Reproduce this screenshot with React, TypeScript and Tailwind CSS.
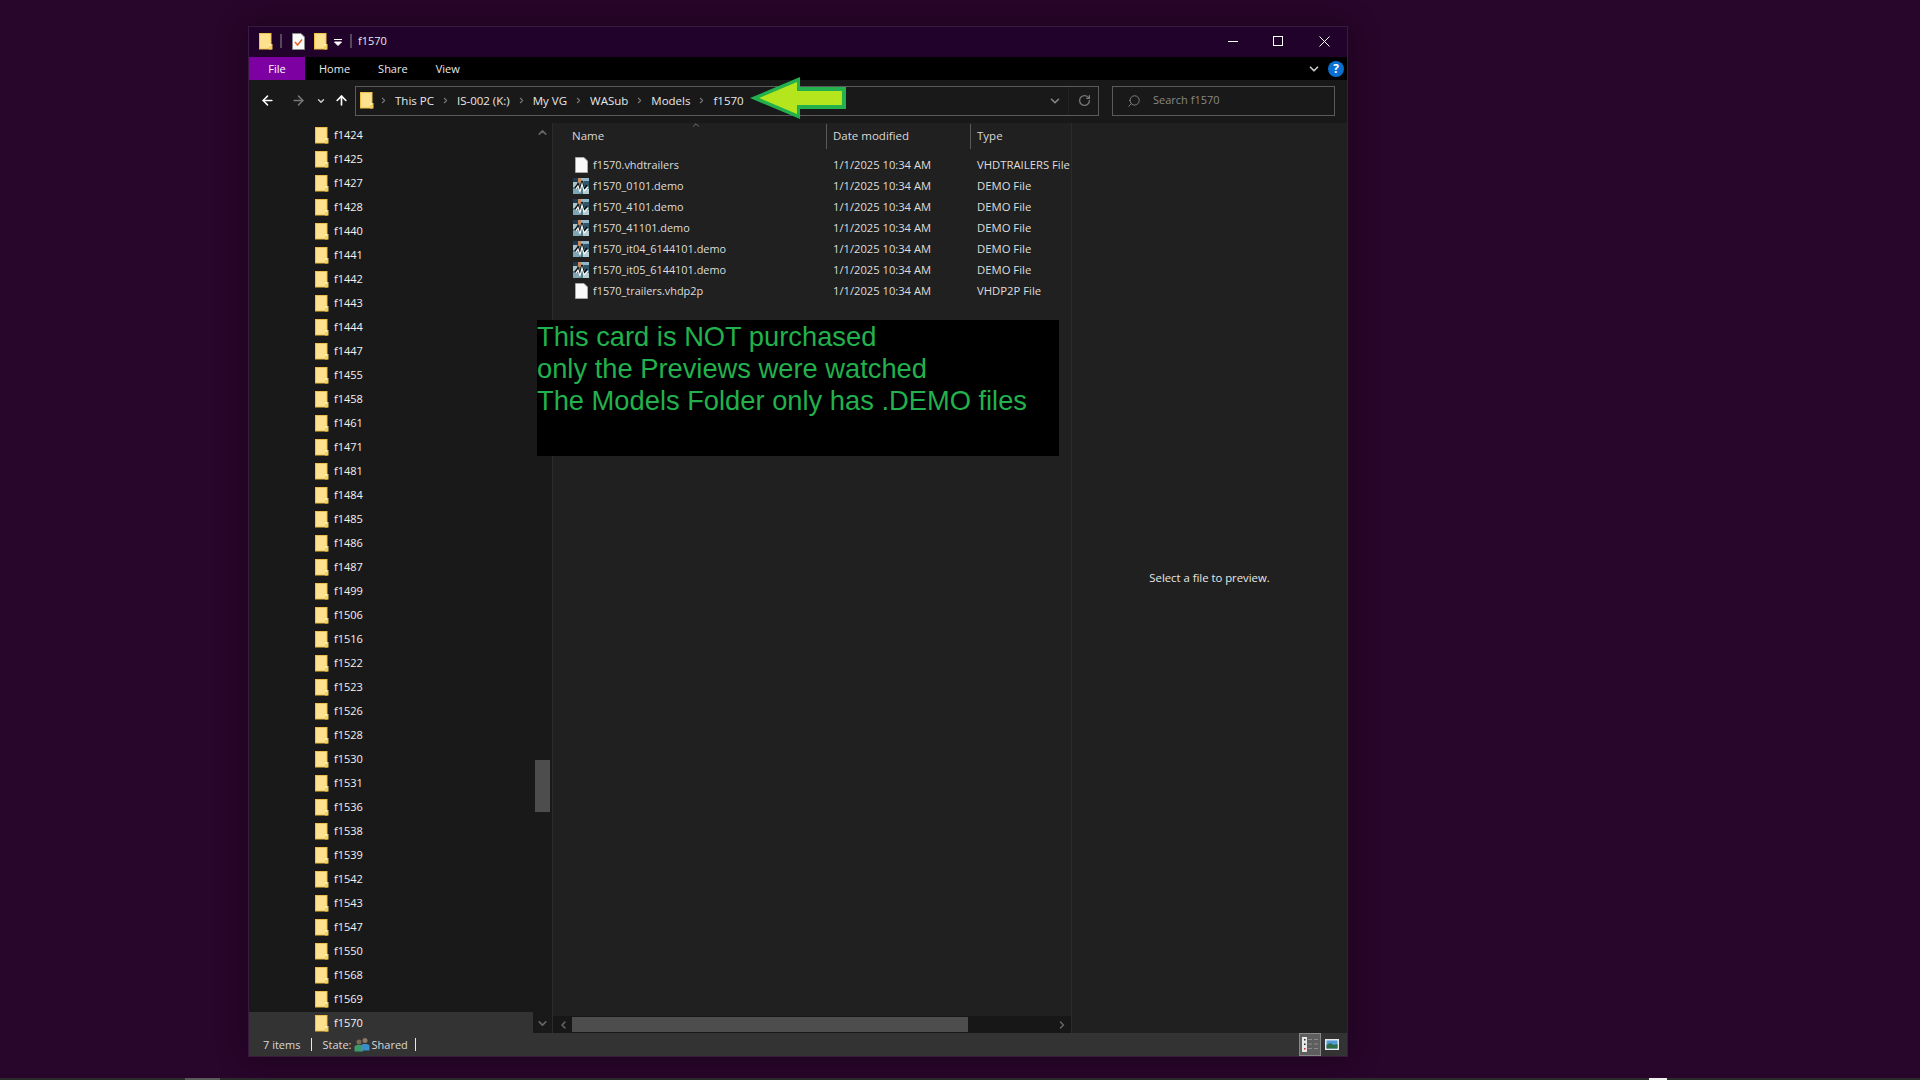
import { ArrowLeft, ArrowRight, ArrowUp, ChevronDown, ChevronLeft, ChevronRight, ChevronUp, RotateCw, Search } from 'lucide-react';

const folders = [
  'f1424', 'f1425', 'f1427', 'f1428', 'f1440', 'f1441', 'f1442', 'f1443', 'f1444', 'f1447',
  'f1455', 'f1458', 'f1461', 'f1471', 'f1481', 'f1484', 'f1485', 'f1486', 'f1487', 'f1499',
  'f1506', 'f1516', 'f1522', 'f1523', 'f1526', 'f1528', 'f1530', 'f1531', 'f1536', 'f1538',
  'f1539', 'f1542', 'f1543', 'f1547', 'f1550', 'f1568', 'f1569', 'f1570',
];

const files = [
  { name: 'f1570.vhdtrailers', type: 'VHDTRAILERS File', demo: false },
  { name: 'f1570_0101.demo', type: 'DEMO File', demo: true },
  { name: 'f1570_4101.demo', type: 'DEMO File', demo: true },
  { name: 'f1570_41101.demo', type: 'DEMO File', demo: true },
  { name: 'f1570_it04_6144101.demo', type: 'DEMO File', demo: true },
  { name: 'f1570_it05_6144101.demo', type: 'DEMO File', demo: true },
  { name: 'f1570_trailers.vhdp2p', type: 'VHDP2P File', demo: false },
];

const crumbs = ['This PC', 'IS-002 (K:)', 'My VG', 'WASub', 'Models', 'f1570'];

function FolderIcon() {
  return (
    <svg width="14" height="17" viewBox="0 0 14 17" className="shrink-0">
      <rect x="0.5" y="0.5" width="11.5" height="15.5" fill="#fde18f" stroke="#eec04a" />
      <rect x="10" y="11" width="3.5" height="5.5" fill="#f5cd5c" />
      <rect x="10" y="11" width="2" height="2" fill="#fff1c4" />
    </svg>
  );
}

function FileIcon() {
  return (
    <svg width="13" height="16" viewBox="0 0 13 16" className="shrink-0">
      <path d="M0.5 0.5H9L12.5 4V15.5H0.5Z" fill="#fafafa" stroke="#a8a8a8" />
    </svg>
  );
}

function DemoIcon() {
  return (
    <svg width="16" height="16" viewBox="0 0 16 16" className="shrink-0">
      <rect width="16" height="16" fill="#4f7f90" />
      <rect width="5" height="4" fill="#1d3a55" />
      <rect x="5" width="3" height="5" fill="#c98a5e" />
      <rect x="8" width="8" height="3" fill="#8fb7c7" />
      <rect y="4" width="4" height="5" fill="#a9c4c9" />
      <rect x="11" y="3" width="5" height="5" fill="#2e5568" />
      <rect y="11" width="6" height="5" fill="#7fa6b4" />
      <rect x="10" y="11" width="6" height="5" fill="#b7cdd4" />
      <path d="M2 10L5 6L7 12L9 3L11 11L14 7" fill="none" stroke="#111" strokeWidth="1.6" />
      <path d="M3 11L5 8L7 14L9 6L11 13L15 9" fill="none" stroke="#fff" strokeWidth="1.1" />
    </svg>
  );
}

function CheckDoc() {
  return (
    <svg width="13" height="17" viewBox="0 0 13 17" className="shrink-0">
      <path d="M0.5 0.5H9L12.5 4V16.5H0.5Z" fill="#fafafa" stroke="#8a8a8a" />
      <path d="M3 9L5.5 12L10 6.5" fill="none" stroke="#e8622c" strokeWidth="1.5" />
    </svg>
  );
}

function SharedIcon() {
  return (
    <svg width="16" height="15" viewBox="0 0 16 15" className="shrink-0">
      <circle cx="5" cy="5" r="2.5" fill="#7a6a58" />
      <path d="M0.5 14.5V10C0.5 8.5 2 8 5 8C8 8 9 8.5 9 10V14.5Z" fill="#3f9a6a" />
      <circle cx="11" cy="3.5" r="2.5" fill="#8a7a68" />
      <path d="M7 13.5V9C7 7.5 8.5 7 11 7C13.5 7 15.5 7.5 15.5 9V13.5Z" fill="#3b8fc9" />
    </svg>
  );
}

function DetailsViewIcon() {
  return (
    <svg width="17" height="17" viewBox="0 0 17 17">
      <rect x="0" y="1" width="5" height="15" fill="#e8e8e8" />
      <rect x="2" y="3" width="1.5" height="1.5" fill="#222" />
      <rect x="2" y="7.5" width="1.5" height="1.5" fill="#222" />
      <rect x="2" y="12" width="1.5" height="1.5" fill="#c0262d" />
      <path d="M6 3.5H10M12 3.5H16M6 8H10M12 8H16M6 12.5H10M12 12.5H16" stroke="#8c8c8c" strokeWidth="1" />
    </svg>
  );
}

function ThumbViewIcon() {
  return (
    <svg width="14" height="11" viewBox="0 0 14 11">
      <rect width="14" height="11" fill="#e8e8e8" />
      <rect x="1.5" y="1.5" width="11" height="8" fill="#4f9ad8" />
      <path d="M1.5 6L5 4L9 6L12.5 5V9.5H1.5Z" fill="#2f6b45" />
    </svg>
  );
}

function GreenArrow() {
  return (
    <svg width="96" height="42" viewBox="0 0 94 42" preserveAspectRatio="none" className="absolute left-[501px] top-[-3px]">
      <polygon points="0,21 49,0 49,10 94,10 94,32 49,32 49,42" fill="#22b14c" />
      <polygon points="9,21 46,5 46,14 90,14 90,28 46,28 46,37" fill="#b5e61d" />
    </svg>
  );
}

export default function App() {
  return (
    <div className="flex h-screen w-screen flex-col overflow-hidden bg-[#28052a] font-['Open_Sans',sans-serif] text-[11.3px] text-[#e8e8e8]">
      <div className="flex-1 pl-[248px] pt-[26px]">
        <div className="flex h-[1031px] w-[1100px] flex-col border border-[#3b1a42] bg-[#191919] shadow-[0_0_30px_rgba(0,0,0,0.3)]">
          {/* title bar */}
          <div className="flex h-[30px] items-center bg-[#21022b] pb-[2px] pl-[10px]">
            <FolderIcon />
            <div className="ml-[7px] h-[14px] w-[2px] bg-[#55485a]" />
            <div className="ml-[10px]"><CheckDoc /></div>
            <div className="ml-[9px]"><FolderIcon /></div>
            <svg width="8" height="7" viewBox="0 0 8 7" className="ml-[6px] mt-[3px]">
              <path d="M0 0.5H8M0.5 3H7.5L4 6.5Z" stroke="#fff" fill="#fff" strokeWidth="1" />
            </svg>
            <div className="ml-[8px] h-[14px] w-[2px] bg-[#55485a]" />
            <span className="ml-[6px] text-[11px]">f1570</span>
            <div className="ml-auto flex">
              <div className="flex h-[28px] w-[46px] items-center justify-center">
                <div className="ml-[2px] h-px w-[10px] bg-white" />
              </div>
              <div className="flex h-[28px] w-[46px] items-center justify-center">
                <div className="h-[10px] w-[10px] border border-white" />
              </div>
              <div className="flex h-[28px] w-[46px] items-center justify-center">
                <svg width="11" height="11" viewBox="0 0 11 11">
                  <path d="M0.5 0.5L10.5 10.5M10.5 0.5L0.5 10.5" stroke="#fff" strokeWidth="1" />
                </svg>
              </div>
            </div>
          </div>

          {/* ribbon tabs */}
          <div className="flex h-[23px] items-center bg-black pt-px text-[11px]">
            <div className="-mt-px flex h-[23px] w-[56px] items-center justify-center bg-[#7d00a3] pt-px text-white">File</div>
            <div className="px-[14px]">Home</div>
            <div className="px-[14px]">Share</div>
            <div className="px-[14px]">View</div>
            <ChevronDown size={14} strokeWidth={3} className="ml-auto text-[#c8c8c8]" />
            <div className="ml-[7px] mr-[3px] flex h-[16px] w-[16px] items-center justify-center rounded-full bg-[#0b6fd0] text-[12px] font-bold text-white">?</div>
          </div>

          {/* toolbar */}
          <div className="relative flex h-[43px] items-center bg-[#191919] pb-[2px]">
            <div className="flex w-[36px] justify-center"><ArrowLeft size={15} strokeWidth={2.4} className="text-white" /></div>
            <div className="flex w-[26px] justify-center"><ArrowRight size={15} strokeWidth={2.4} className="text-[#777]" /></div>
            <div className="flex w-[20px] justify-center"><ChevronDown size={10} strokeWidth={3.5} className="text-[#ccc]" /></div>
            <div className="flex w-[20px] justify-center"><ArrowUp size={15} strokeWidth={2.6} className="text-white" /></div>
            <div className="ml-[4px] flex h-[30px] w-[744px] items-center border border-[#5a5a5a] pl-[4px] text-[11.5px]">
              <FolderIcon />
              <div className="-ml-[2px] flex items-center">
                {crumbs.map((c) => (
                  <div key={c} className="flex items-center">
                    <ChevronRight size={9} strokeWidth={3} className="mx-[7px] text-[#777]" />
                    <span>{c}</span>
                  </div>
                ))}
              </div>
              <ChevronDown size={14} strokeWidth={2.6} className="ml-auto mr-[6px] text-[#888]" />
              <div className="flex h-full w-[30px] items-center justify-center border-l border-[#222] pl-[2px]">
                <RotateCw size={13} strokeWidth={2.4} className="text-[#777]" />
              </div>
            </div>
            <div className="ml-[13px] flex h-[30px] w-[223px] items-center border border-[#5a5a5a] pl-[14px] text-[11px] text-[#888]">
              <Search size={14} strokeWidth={1.5} className="-scale-x-100 text-[#888]" />
              <span className="ml-[12px]">Search f1570</span>
            </div>
            <GreenArrow />
          </div>

          {/* main area */}
          <div className="relative flex min-h-0 flex-1">
            {/* nav pane */}
            <div className="flex w-[303px] shrink-0 overflow-hidden bg-[#191919]">
              <div className="w-[284px] shrink-0 text-[11px]">
                {folders.map((f) => (
                  <div
                    key={f}
                    className={
                      f === 'f1570'
                        ? 'flex h-[24px] items-center gap-[5px] border-t border-[#191919] bg-[#333] pb-px pl-[66px] text-[#f2f2f2]'
                        : 'flex h-[24px] items-center gap-[5px] pl-[66px] text-[#f2f2f2]'
                    }
                  >
                    <FolderIcon />
                    <span>{f}</span>
                  </div>
                ))}
              </div>
              <div className="flex w-[18px] flex-col items-center">
                <ChevronUp size={13} strokeWidth={3} className="mt-[3px] text-[#666]" />
                <div className="ml-px mt-[621px] h-[52px] w-[15px] bg-[#4d4d4d]" />
                <ChevronDown size={13} strokeWidth={3} className="mt-auto mb-[3px] text-[#666]" />
              </div>
            </div>
            <div className="w-px bg-[#2b2b2b]" />

            {/* file list */}
            <div className="flex w-[518px] shrink-0 flex-col bg-[#202020]">
              <div className="relative grid h-[26px] grid-cols-[273px_144px_101px] items-center text-[11.5px] text-[#d8d8d8]">
                <div className="pl-[19px]">Name</div>
                <div className="flex h-[25px] items-center border-l border-[#5a5a5a] pl-[6px]">Date modified</div>
                <div className="flex h-[25px] items-center border-l border-[#5a5a5a] pl-[6px]">Type</div>
                <ChevronUp size={10} strokeWidth={1.5} className="absolute left-[138px] top-[-3px] text-[#aaa]" />
              </div>
              <div className="mt-[6px]">
                {files.map((f) => (
                  <div key={f.name} className="grid h-[21px] grid-cols-[273px_144px_101px] items-center whitespace-nowrap text-[#dedede]">
                    <div className="flex items-center pl-[20px] text-[10.9px]">
                      <div className="flex w-[20px] justify-center pr-[4px]">{f.demo ? <DemoIcon /> : <FileIcon />}</div>
                      <span>{f.name}</span>
                    </div>
                    <div className="pl-[7px] text-[11.2px]">1/1/2025 10:34 AM</div>
                    <div className="pl-[7px]">{f.type}</div>
                  </div>
                ))}
              </div>
              <div className="mt-auto flex h-[17px] items-center bg-[#171717] pr-px">
                <ChevronLeft size={12} strokeWidth={3} className="ml-[3px] mr-px w-[15px] text-[#666]" />
                <div className="h-[15px] w-[396px] bg-[#4d4d4d]" />
                <ChevronRight size={12} strokeWidth={3} className="ml-auto mr-[2px] text-[#666]" />
              </div>
            </div>
            <div className="w-px bg-[#2b2b2b]" />

            {/* preview */}
            <div className="flex flex-1 items-center justify-center bg-[#202020] text-[#e8e8e8]">
              Select a file to preview.
            </div>

            {/* annotation pasted over the window */}
            <div className="absolute left-[288px] top-[197px] h-[136px] w-[522px] bg-black pt-px font-['Liberation_Sans',sans-serif] text-[27.3px] leading-[32px] text-[#22b14c]">
              <div>This card is NOT purchased</div>
              <div>only the Previews were watched</div>
              <div>The Models Folder only has .DEMO files</div>
            </div>
          </div>

          {/* status bar */}
          <div className="flex h-[23px] items-center bg-[#333] pl-[14px] text-[11px] text-[#d8d8d8]">
            <span className="pt-px">7 items</span>
            <div className="ml-[11px] h-[13px] w-px bg-[#e8e8e8]" />
            <span className="ml-[10px] pt-px">State:</span>
            <div className="ml-[2px]"><SharedIcon /></div>
            <span className="ml-[2px] pt-px">Shared</span>
            <div className="ml-[7px] h-[13px] w-px bg-[#e8e8e8]" />
            <div className="ml-auto flex h-full w-[22px] items-center justify-center border border-[#888] bg-[#5e5e5e]">
              <DetailsViewIcon />
            </div>
            <div className="ml-[4px] mr-[8px]"><ThumbViewIcon /></div>
          </div>
        </div>
      </div>

      {/* sliver of the taskbar at the bottom edge */}
      <div className="flex h-[2px] bg-[#2a2a2a]">
        <div className="ml-[185px] w-[35px] bg-[#5a5a5a]" />
        <div className="ml-[1429px] w-[18px] bg-[#f0f0f0]" />
      </div>
    </div>
  );
}
